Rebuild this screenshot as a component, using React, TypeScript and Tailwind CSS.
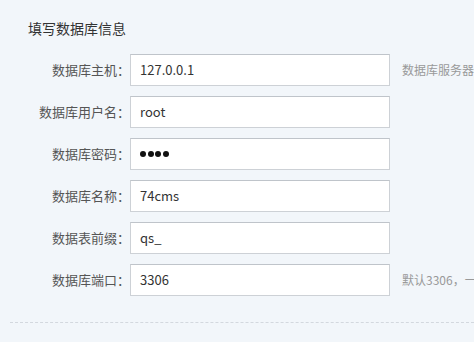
import React from 'react';

type Field = {
  label: string;
  value: string;
  hint?: string;
  password?: boolean;
};

const fields: Field[] = [
  { label: '数据库主机：', value: '127.0.0.1', hint: '数据库服务器' },
  { label: '数据库用户名：', value: 'root' },
  { label: '数据库密码：', value: '1234', password: true },
  { label: '数据库名称：', value: '74cms' },
  { label: '数据表前缀：', value: 'qs_' },
  { label: '数据库端口：', value: '3306', hint: '默认3306，一' },
];

const App: React.FC = () => {
  return (
    <div
      className="w-full h-[342px] overflow-hidden bg-[#f2f6fa]"
      style={{ fontFamily: '"Noto Sans CJK SC", "Noto Sans", sans-serif' }}
    >
      {/* Section title */}
      <div className="pt-[20px] pl-[28px] text-[14px] leading-[16px] text-[#333]">
        填写数据库信息
      </div>

      {/* Form rows */}
      <div className="mt-[18px] flex flex-col gap-[10px]">
        {fields.map((f) => (
          <div key={f.label} className="flex items-center h-[32px] whitespace-nowrap">
            <div className="w-[130px] shrink-0 text-right text-[13px] text-[#555]">{f.label}</div>
            <div className="w-[260px] h-[32px] shrink-0 flex items-center pl-[9px] bg-white border border-[#cdd1d6] border-t-[#bfc4ca] text-[13px] text-[#333]">
              {f.password ? (
                <div className="flex gap-[1.5px]">
                  {[0, 1, 2, 3].map((i) => (
                    <span key={i} className="w-[6px] h-[6px] rounded-full bg-[#111]" />
                  ))}
                </div>
              ) : (
                f.value
              )}
            </div>
            {f.hint && <div className="ml-[12px] text-[12px] text-[#999]">{f.hint}</div>}
          </div>
        ))}
      </div>

      {/* Divider */}
      <div className="ml-[10px] mt-[26px] border-t border-dashed border-[#d3d8de]" />
    </div>
  );
};

export default App;
